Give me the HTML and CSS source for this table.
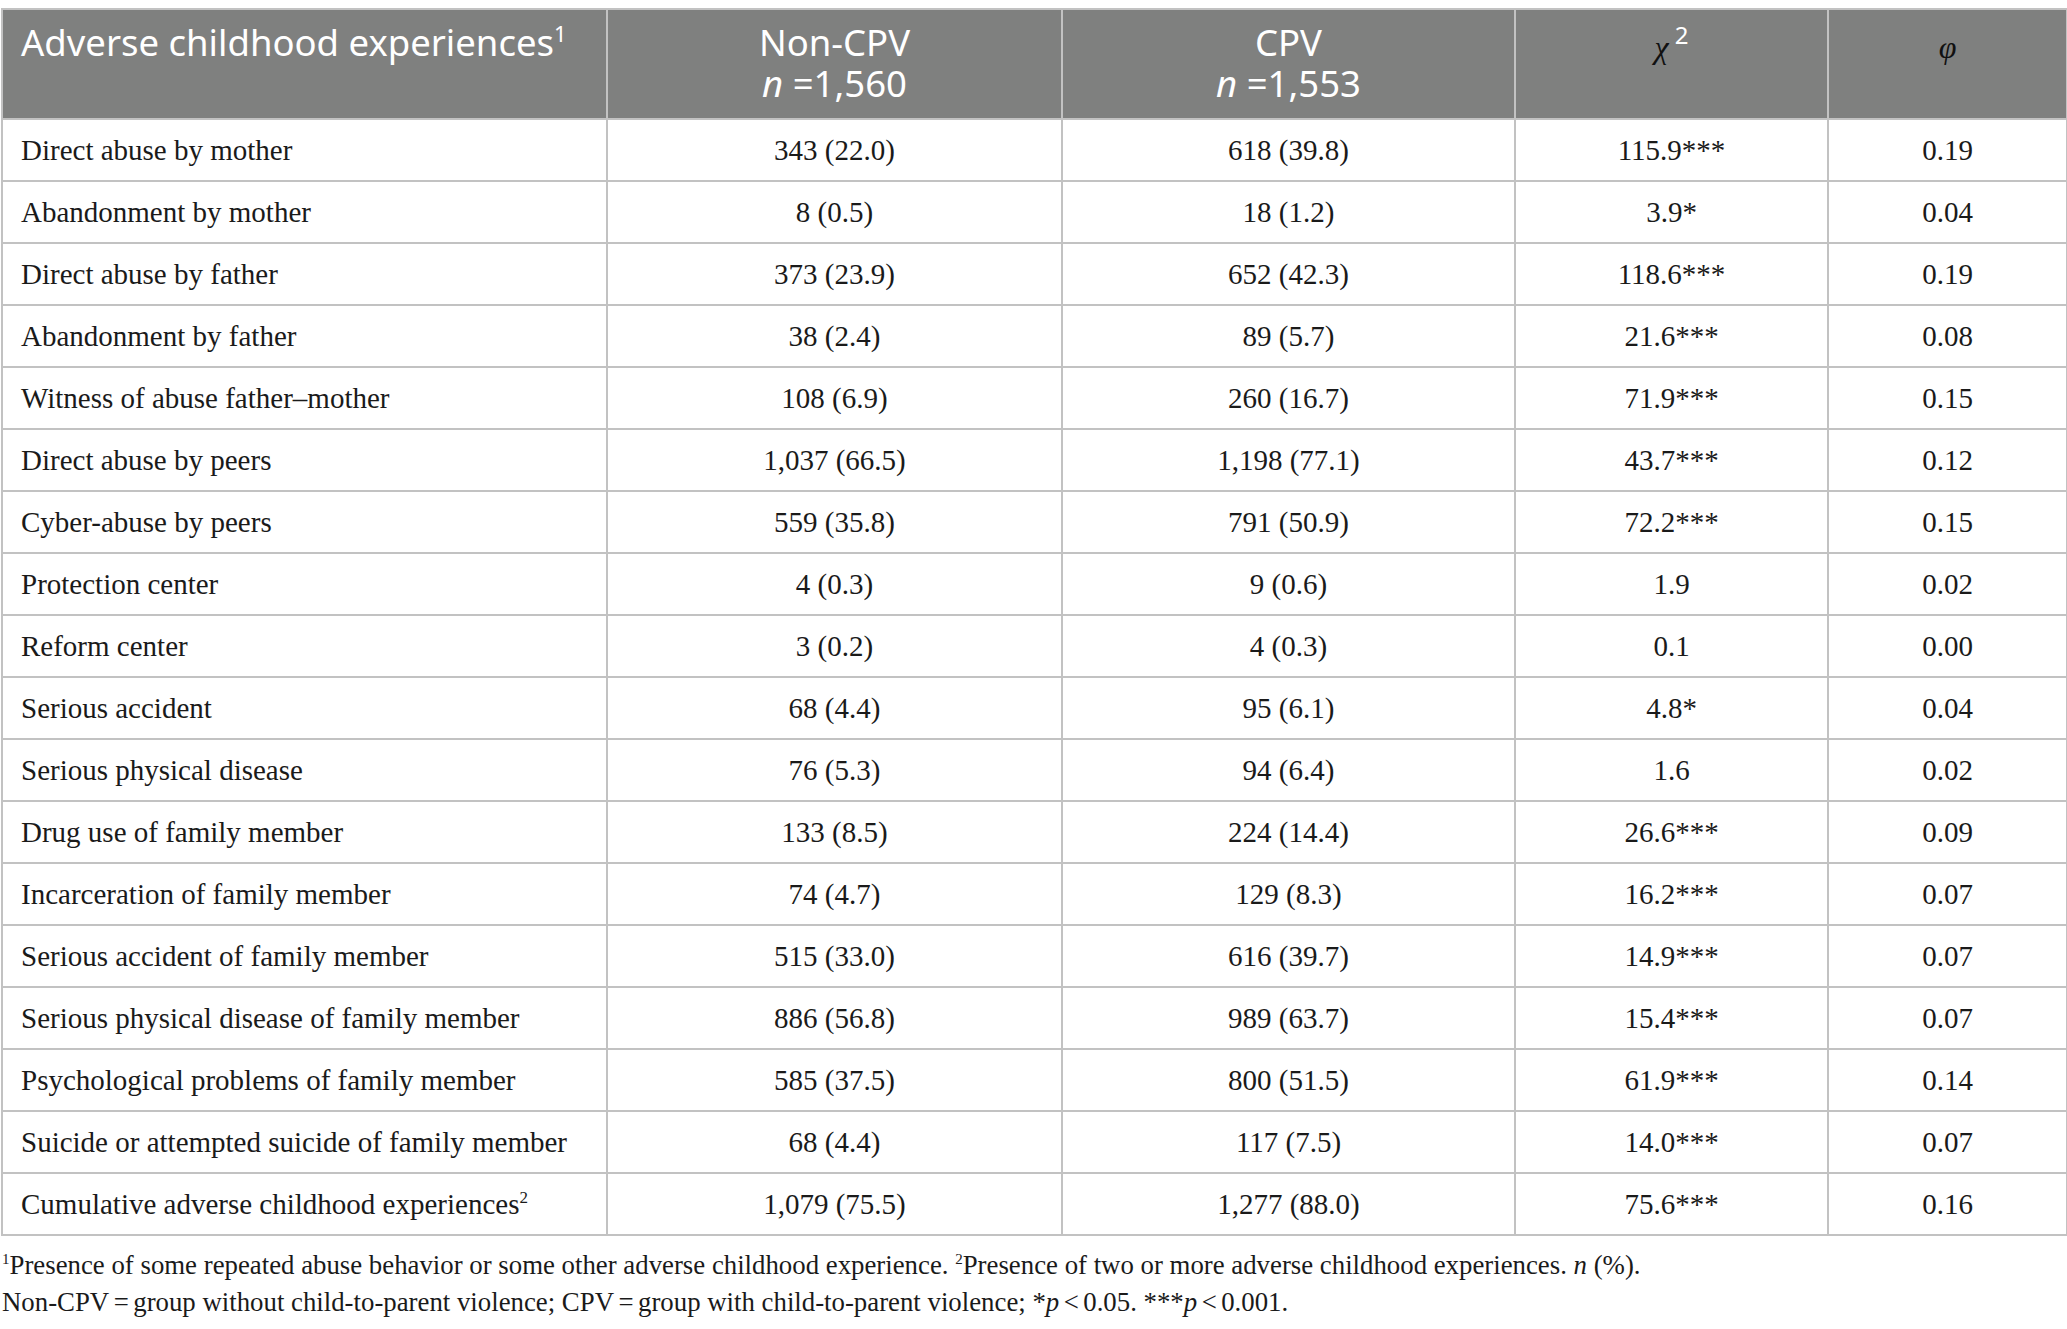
FILE: index.html
```html
<!DOCTYPE html>
<html>
<head>
<meta charset="utf-8">
<link rel="stylesheet" href="styles.css">
</head>
<body>
<div class="page">
<table class="tbl">
  <colgroup>
    <col class="c1"><col class="c2"><col class="c3"><col class="c4"><col class="c5">
  </colgroup>
  <thead>
    <tr>
      <th class="left"><span class="hl">Adverse childhood experiences<sup class="hsup">1</sup></span></th>
      <th><span class="hl">Non-CPV</span><span class="hl"><i>n</i> =1,560</span></th>
      <th><span class="hl">CPV</span><span class="hl"><i>n</i> =1,553</span></th>
      <th><span class="hl"><span class="greek">χ</span><sup class="hsup2">2</sup></span></th>
      <th><span class="hl"><span class="greek">φ</span></span></th>
    </tr>
  </thead>
  <tbody>
    <tr><td class="left">Direct abuse by mother</td><td>343 (22.0)</td><td>618 (39.8)</td><td>115.9***</td><td>0.19</td></tr>
    <tr><td class="left">Abandonment by mother</td><td>8 (0.5)</td><td>18 (1.2)</td><td>3.9*</td><td>0.04</td></tr>
    <tr><td class="left">Direct abuse by father</td><td>373 (23.9)</td><td>652 (42.3)</td><td>118.6***</td><td>0.19</td></tr>
    <tr><td class="left">Abandonment by father</td><td>38 (2.4)</td><td>89 (5.7)</td><td>21.6***</td><td>0.08</td></tr>
    <tr><td class="left">Witness of abuse father–mother</td><td>108 (6.9)</td><td>260 (16.7)</td><td>71.9***</td><td>0.15</td></tr>
    <tr><td class="left">Direct abuse by peers</td><td>1,037 (66.5)</td><td>1,198 (77.1)</td><td>43.7***</td><td>0.12</td></tr>
    <tr><td class="left">Cyber-abuse by peers</td><td>559 (35.8)</td><td>791 (50.9)</td><td>72.2***</td><td>0.15</td></tr>
    <tr><td class="left">Protection center</td><td>4 (0.3)</td><td>9 (0.6)</td><td>1.9</td><td>0.02</td></tr>
    <tr><td class="left">Reform center</td><td>3 (0.2)</td><td>4 (0.3)</td><td>0.1</td><td>0.00</td></tr>
    <tr><td class="left">Serious accident</td><td>68 (4.4)</td><td>95 (6.1)</td><td>4.8*</td><td>0.04</td></tr>
    <tr><td class="left">Serious physical disease</td><td>76 (5.3)</td><td>94 (6.4)</td><td>1.6</td><td>0.02</td></tr>
    <tr><td class="left">Drug use of family member</td><td>133 (8.5)</td><td>224 (14.4)</td><td>26.6***</td><td>0.09</td></tr>
    <tr><td class="left">Incarceration of family member</td><td>74 (4.7)</td><td>129 (8.3)</td><td>16.2***</td><td>0.07</td></tr>
    <tr><td class="left">Serious accident of family member</td><td>515 (33.0)</td><td>616 (39.7)</td><td>14.9***</td><td>0.07</td></tr>
    <tr><td class="left">Serious physical disease of family member</td><td>886 (56.8)</td><td>989 (63.7)</td><td>15.4***</td><td>0.07</td></tr>
    <tr><td class="left">Psychological problems of family member</td><td>585 (37.5)</td><td>800 (51.5)</td><td>61.9***</td><td>0.14</td></tr>
    <tr><td class="left">Suicide or attempted suicide of family member</td><td>68 (4.4)</td><td>117 (7.5)</td><td>14.0***</td><td>0.07</td></tr>
    <tr><td class="left">Cumulative adverse childhood experiences<sup class="bsup">2</sup></td><td>1,079 (75.5)</td><td>1,277 (88.0)</td><td>75.6***</td><td>0.16</td></tr>
  </tbody>
</table>
<div class="notes">
  <p><sup class="nsup">1</sup>Presence of some repeated abuse behavior or some other adverse childhood experience. <sup class="nsup">2</sup>Presence of two or more adverse childhood experiences. <i>n</i> (%).</p>
  <p>Non-CPV&#8198;=&#8198;group without child-to-parent violence; CPV&#8198;=&#8198;group with child-to-parent violence; *<i>p</i>&#8198;&lt;&#8198;0.05. ***<i>p</i>&#8198;&lt;&#8198;0.001.</p>
</div>
</div>
</body>
</html>
```

FILE: styles.css
```css
html, body {
  margin: 0;
  padding: 0;
  background: #ffffff;
}

.page {
  padding: 8px 0 0 1px;
  width: 2066px;
}

.tbl {
  border-collapse: collapse;
  table-layout: fixed;
  width: 2065px;
  font-family: "Liberation Serif", "Times New Roman", serif;
  font-size: 29px;
  color: #1a1a1a;
}

.c1 { width: 605px; }
.c2 { width: 455px; }
.c3 { width: 453px; }
.c4 { width: 313px; }
.c5 { width: 239px; }

.tbl th, .tbl td {
  border: 2px solid #c2c2c2;
  text-align: center;
}

.tbl th {
  background: #7f807f;
  color: #ffffff;
  font-family: "Noto Sans", "Open Sans", sans-serif;
  font-weight: 400;
  font-size: 36.5px;
  line-height: 41px;
  height: 110px;
  padding: 12px 0 0 0;
  vertical-align: top;
  box-sizing: border-box;
}

.hl {
  display: block;
  height: 41px;
  line-height: 41px;
  white-space: nowrap;
}

.tbl td {
  height: 62px;
  padding: 0;
  vertical-align: middle;
  box-sizing: border-box;
}

.tbl .left {
  text-align: left;
  padding-left: 18px;
}

.hsup {
  font-size: 22px;
  vertical-align: 14px;
  line-height: 0;
}

.greek {
  font-family: "Liberation Serif", "Times New Roman", serif;
  font-style: italic;
  color: #111111;
  font-size: 32px;
  vertical-align: -2px;
}

.hsup2 {
  font-size: 24px;
  vertical-align: 12px;
  line-height: 0;
  margin-left: 6px;
}

.bsup {
  font-size: 17px;
  vertical-align: 11px;
  line-height: 0;
}

.notes {
  margin-top: 11px;
  font-family: "Liberation Serif", "Times New Roman", serif;
  font-size: 26.8px;
  line-height: 37px;
  color: #1a1a1a;
  padding-left: 1px;
}

.notes p {
  margin: 0;
  white-space: nowrap;
}

.nsup {
  font-size: 15px;
  vertical-align: 10px;
  line-height: 0;
}
```
